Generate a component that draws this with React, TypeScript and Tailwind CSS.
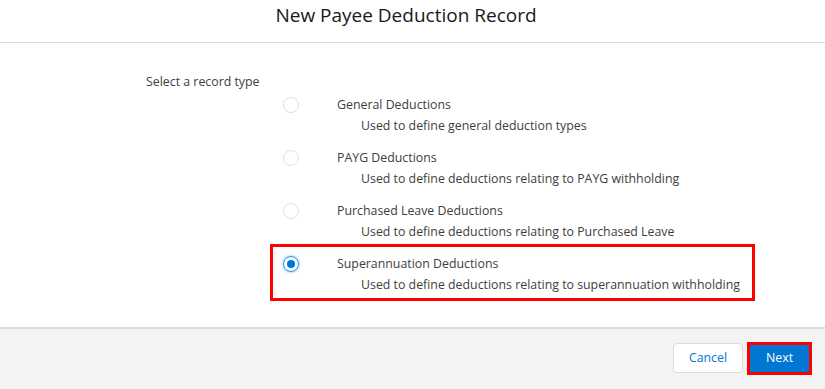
import React, { useState } from 'react';

const options = [
  { name: 'General Deductions', desc: 'Used to define general deduction types' },
  { name: 'PAYG Deductions', desc: 'Used to define deductions relating to PAYG withholding' },
  { name: 'Purchased Leave Deductions', desc: 'Used to define deductions relating to Purchased Leave' },
  { name: 'Superannuation Deductions', desc: 'Used to define deductions relating to superannuation withholding' },
];

export default function App() {
  const [selected, setSelected] = useState(3);

  return (
    <div className="w-[825px] h-[389px] bg-white flex flex-col overflow-hidden text-[#3e3e3c] font-['Open_Sans',sans-serif]">
      {/* Header */}
      <div className="h-[43px] shrink-0 border-b border-[#dddbda] flex justify-center pr-[13px]">
        <h2 className="text-[19px] leading-[28px] pt-[1px] text-[#181818]">New Payee Deduction Record</h2>
      </div>

      {/* Body */}
      <div className="h-[284px] shrink-0 pt-[31px] pl-[146px]">
        <div className="text-[12.35px] leading-[16px]">Select a record type</div>
        <div className="-mt-[5px] ml-[124px] w-[485px] flex flex-col">
          {options.map((opt, i) => {
            const on = selected === i;
            return (
              <label
                key={opt.name}
                onClick={() => setSelected(i)}
                className={`flex items-start pl-[10px] pt-[7px] pb-[3px] border-[3px] cursor-pointer ${i > 0 ? '-mt-1' : ''} ${i === 3 ? 'border-[#ff0000]' : 'border-transparent'}`}
              >
                <span className="w-[16px] h-[20px] flex items-center shrink-0">
                  {on ? (
                    <span className="w-[16px] h-[16px] rounded-full border border-[#1b96ff] shadow-[0_0_3px_#64b5ff] flex items-center justify-center">
                      <span className="w-[8px] h-[8px] rounded-full bg-[#0176d3]" />
                    </span>
                  ) : (
                    <span className="w-[16px] h-[16px] rounded-full border border-[#e0e0e0] bg-white" />
                  )}
                </span>
                <div className="ml-[38px] text-[12.35px]">
                  <div className="leading-[20px]">{opt.name}</div>
                  <div className="leading-[20px] mt-[1px] ml-[24px] whitespace-nowrap">{opt.desc}</div>
                </div>
              </label>
            );
          })}
        </div>
      </div>

      {/* Footer */}
      <div className="flex-1 border-t-2 border-[#dddbda] bg-[#f3f3f3] flex justify-end items-start pt-[13px] pr-[13px]">
        <button className="mt-[1px] h-[30px] w-[70px] rounded-[4px] border border-[#dddbda] bg-white text-[12.35px] text-[#0176d3]">
          Cancel
        </button>
        <button className="ml-[4px] h-[33px] w-[65px] border-[3px] border-[#ff0000] bg-[#0176d3] text-[12.35px] font-medium text-white">
          Next
        </button>
      </div>
    </div>
  );
}
